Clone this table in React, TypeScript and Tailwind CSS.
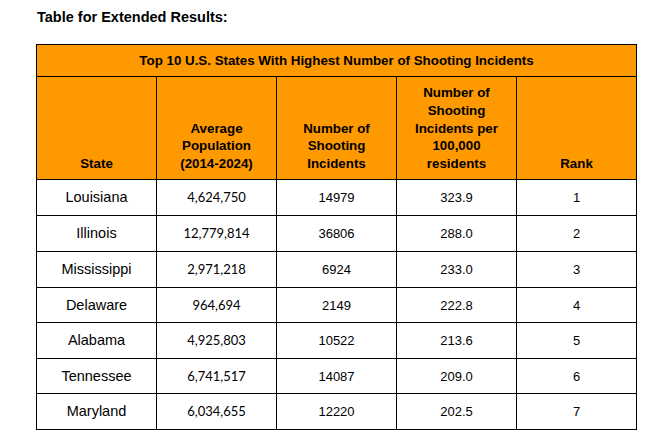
import React from "react";

const rows = [
  ["Louisiana", "4,624,750", "14979", "323.9", "1"],
  ["Illinois", "12,779,814", "36806", "288.0", "2"],
  ["Mississippi", "2,971,218", "6924", "233.0", "3"],
  ["Delaware", "964,694", "2149", "222.8", "4"],
  ["Alabama", "4,925,803", "10522", "213.6", "5"],
  ["Tennessee", "6,741,517", "14087", "209.0", "6"],
  ["Maryland", "6,034,655", "12220", "202.5", "7"],
];

const heights = ["h-[36px]", "h-[36px]", "h-[36px]", "h-[35px]", "h-[36px]", "h-[35px]", "h-[36px]"];

export default function App() {
  return (
    <div className="w-[662px] h-[430px] overflow-hidden bg-white text-black font-['Liberation_Sans',Arial,sans-serif]">
      <div className="pl-[37px] pt-[9px] text-[14.5px] leading-[17px] font-bold">Table for Extended Results:</div>
      <table className="ml-[36px] mt-[18px] w-[600px] table-fixed border-collapse">
        <colgroup>
          <col className="w-[120px]" />
          <col className="w-[120px]" />
          <col className="w-[120px]" />
          <col className="w-[120px]" />
          <col className="w-[120px]" />
        </colgroup>
        <thead>
          <tr>
            <th colSpan={5} className="h-[32px] border border-black bg-[#ff9900] p-0 text-center align-middle text-[13.33px] font-bold leading-[16px]">
              Top 10 U.S. States With Highest Number of Shooting Incidents
            </th>
          </tr>
          <tr className="text-[13.33px] font-bold leading-[17.8px]">
            <th className="h-[103px] border border-black bg-[#ff9900] px-2 pb-[6px] align-bottom text-center">State</th>
            <th className="border border-black bg-[#ff9900] px-2 pb-[6px] align-bottom text-center">
              Average<br />Population<br />(2014-2024)
            </th>
            <th className="border border-black bg-[#ff9900] px-2 pb-[6px] align-bottom text-center">
              Number of<br />Shooting<br />Incidents
            </th>
            <th className="border border-black bg-[#ff9900] px-2 pb-[6px] align-bottom text-center">
              Number of<br />Shooting<br />Incidents per<br />100,000<br />residents
            </th>
            <th className="border border-black bg-[#ff9900] px-2 pb-[6px] align-bottom text-center">Rank</th>
          </tr>
        </thead>
        <tbody>
          {rows.map((r, i) => (
            <tr key={r[0]}>
              <td className={`${heights[i]} border border-black p-0 text-center align-middle text-[14.5px] leading-[17px]`}>{r[0]}</td>
              <td className="border border-black p-0 text-center align-middle font-['Lato',sans-serif] text-[13px] leading-[17px]">{r[1]}</td>
              <td className="border border-black p-0 text-center align-middle text-[13px] leading-[17px]">{r[2]}</td>
              <td className="border border-black p-0 text-center align-middle text-[13px] leading-[17px]">{r[3]}</td>
              <td className="border border-black p-0 text-center align-middle text-[13px] leading-[17px]">{r[4]}</td>
            </tr>
          ))}
        </tbody>
      </table>
    </div>
  );
}
